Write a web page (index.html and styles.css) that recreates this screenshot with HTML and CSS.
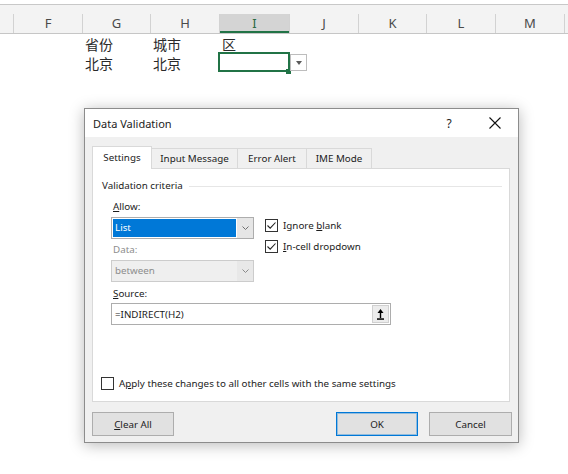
FILE: index.html
```html
<!DOCTYPE html>
<html>
<head>
<meta charset="utf-8">
<link rel="stylesheet" href="styles.css">
</head>
<body>
<div class="sheet">
  <div class="colhead">
    <div class="ch first"></div>
    <div class="ch">F</div>
    <div class="ch">G</div>
    <div class="ch">H</div>
    <div class="ch sel">I</div>
    <div class="ch">J</div>
    <div class="ch">K</div>
    <div class="ch">L</div>
    <div class="ch">M</div>
    <div class="ch"></div>
  </div>
  <div class="row r1">
    <div class="c"></div>
    <div class="c"></div>
    <div class="c">省份</div>
    <div class="c">城市</div>
    <div class="c">区</div>
  </div>
  <div class="row r2">
    <div class="c"></div>
    <div class="c"></div>
    <div class="c">北京</div>
    <div class="c">北京</div>
    <div class="c active"><span class="handle"></span><span class="dd"><span class="tri"></span></span></div>
  </div>
</div>

<div class="dialog">
  <div class="titlebar">
    <span class="title">Data Validation</span>
    <span class="tbtn help">?</span>
    <span class="tbtn close">
      <svg width="12" height="12" viewBox="0 0 12 12"><path d="M0.5 0.5 L11.5 11.5 M11.5 0.5 L0.5 11.5" stroke="#111" stroke-width="1.1" fill="none"/></svg>
    </span>
  </div>
  <div class="content">
    <div class="tabs">
      <div class="tab active w1">Settings</div>
      <div class="tab w2">Input Message</div>
      <div class="tab w3">Error Alert</div>
      <div class="tab w4">IME Mode</div>
    </div>
    <div class="panel">
      <div class="crit"><span>Validation criteria</span><span class="line"></span></div>
      <div class="fields">
        <div class="upper">
          <div class="left">
            <div class="lbl allow"><u>A</u>llow:</div>
            <div class="combo">
              <div class="val hl">List</div>
              <div class="cbtn"><svg width="7" height="4" viewBox="0 0 7 4"><path d="M0.5 0.5 L3.5 3.5 L6.5 0.5" stroke="#707070" fill="none"/></svg></div>
            </div>
            <div class="lbl data">Data:</div>
            <div class="combo dis">
              <div class="val">between</div>
              <div class="cbtn"><svg width="7" height="4" viewBox="0 0 7 4"><path d="M0.5 0.5 L3.5 3.5 L6.5 0.5" stroke="#8a8a8a" fill="none"/></svg></div>
            </div>
          </div>
          <div class="right">
            <div class="chk"><span class="box"><svg width="11" height="11" viewBox="0 0 11 11"><path d="M1.5 5.5 L4.2 8.2 L9.5 2.5" stroke="#222" stroke-width="1.1" fill="none"/></svg></span><span class="ct">Ignore <u>b</u>lank</span></div>
            <div class="chk"><span class="box"><svg width="11" height="11" viewBox="0 0 11 11"><path d="M1.5 5.5 L4.2 8.2 L9.5 2.5" stroke="#222" stroke-width="1.1" fill="none"/></svg></span><span class="ct"><u>I</u>n-cell dropdown</span></div>
          </div>
        </div>
        <div class="lbl src"><u>S</u>ource:</div>
        <div class="input">
          <span class="itext">=INDIRECT(H2)</span>
          <span class="pick"><svg width="9" height="13" viewBox="0 0 9 13"><path d="M4.5 1 L7.5 5 L1.5 5 Z" fill="#000"/><rect x="3.8" y="4.5" width="1.4" height="5.5" fill="#000"/><rect x="1" y="10.3" width="7" height="1.5" fill="#000"/></svg></span>
        </div>
      </div>
      <div class="apply"><span class="box"></span><span class="ct">A<u>p</u>ply these changes to all other cells with the same settings</span></div>
    </div>
    <div class="buttons">
      <div class="b clear"><u>C</u>lear All</div>
      <div class="b ok">OK</div>
      <div class="b cancel">Cancel</div>
    </div>
  </div>
</div>
</body>
</html>
```

FILE: styles.css
```css
html, body {
  margin: 0;
  padding: 0;
}
body {
  width: 568px;
  height: 474px;
  overflow: hidden;
  background: #fff;
  position: relative;
  font-family: "Noto Sans", "Liberation Sans", sans-serif;
}

/* spreadsheet */
.sheet {
  padding-top: 4px;
}
.colhead {
  display: grid;
  grid-template-columns: 13px 69px 68px 69px 70px 69px 68px 69px 69px 1fr;
  height: 30px;
  box-sizing: border-box;
  border-top: 1px solid #c8c8c8;
  border-bottom: 1px solid #c6c6c6;
  background: #f3f3f3;
  align-items: end;
}
.ch {
  height: 19px;
  line-height: 19px;
  text-align: center;
  font-size: 13px;
  color: #4a4a4a;
  border-left: 1px solid #d2d2d2;
}
.ch.first {
  border-left: 0;
}
.ch.sel {
  background: #d4d4d4;
  color: #2b6a45;
  box-shadow: inset 0 -2px #217346;
}
.row {
  display: grid;
  grid-template-columns: 13px 69px 68px 69px 70px 69px 68px 69px 69px 1fr;
}
.r1 {
  height: 18px;
}
.r2 {
  height: 20px;
}
.c {
  font-family: "Noto Sans CJK SC", "Noto Sans", sans-serif;
  font-size: 14px;
  line-height: 16px;
  padding-left: 3px;
  color: #2a2a2a;
}
.r1 .c {
  padding-top: 2px;
}
.r2 .c {
  padding-top: 3px;
}
.c.active {
  position: relative;
}
.c.active::before {
  content: "";
  position: absolute;
  left: -1px;
  top: 0;
  width: 72px;
  height: 20px;
  box-sizing: border-box;
  border: 2px solid #217346;
}
.handle {
  position: absolute;
  left: 67px;
  top: 17px;
  width: 5px;
  height: 5px;
  background: #217346;
}
.dd {
  position: absolute;
  left: 71px;
  top: 2px;
  width: 17px;
  height: 17px;
  box-sizing: border-box;
  border: 1px solid #bdbdbd;
  background: #fff;
  display: flex;
  align-items: center;
  justify-content: center;
}
.tri {
  width: 0;
  height: 0;
  border-left: 3.5px solid transparent;
  border-right: 3.5px solid transparent;
  border-top: 4px solid #5a5a5a;
}

/* dialog */
.dialog {
  position: absolute;
  left: 84px;
  top: 108px;
  width: 435px;
  height: 335px;
  box-sizing: border-box;
  border: 1px solid #8c8c8c;
  background: #f0f0f0;
  box-shadow: 0 2px 14px rgba(0, 0, 0, 0.28);
  font-size: 9.8px;
  color: #1c1c1c;
  display: flex;
  flex-direction: column;
}
.titlebar {
  height: 28px;
  background: #fff;
  display: flex;
  align-items: center;
  padding-left: 8px;
}
.title {
  font-size: 11px;
}
.tbtn {
  width: 46px;
  height: 28px;
  display: flex;
  align-items: center;
  justify-content: center;
}
.help {
  margin-left: auto;
  font-size: 12px;
}
.content {
  flex: 1;
  padding: 9px 8px 0 7px;
  display: flex;
  flex-direction: column;
}
.tabs {
  display: flex;
  align-items: flex-end;
  height: 22px;
}
.tab {
  height: 20px;
  box-sizing: border-box;
  border: 1px solid #d9d9d9;
  border-bottom: 0;
  background: #f0f0f0;
  text-align: center;
  line-height: 19px;
  margin-left: -1px;
}
.tab.active {
  height: 23px;
  margin-left: 0;
  margin-bottom: -1px;
  background: #fff;
  position: relative;
  z-index: 1;
  line-height: 21px;
}
.w1 { width: 60px; }
.w2 { width: 87px; }
.w3 { width: 70px; }
.w4 { width: 66px; }

.panel {
  width: 418px;
  height: 234px;
  box-sizing: border-box;
  background: #fff;
  border: 1px solid #d9d9d9;
  display: flex;
  flex-direction: column;
  padding: 10px 7px 11px 9px;
}
.crit {
  display: flex;
  align-items: center;
  height: 14px;
  line-height: 14px;
}
.crit .line {
  flex: 1;
  height: 1px;
  background: #e6e6e6;
  margin-left: 6px;
}
.fields {
  margin-left: 9px;
}
.upper {
  display: flex;
}
.left {
  width: 143px;
}
.lbl {
  height: 14px;
  line-height: 14px;
  padding-left: 2px;
}
.lbl.allow {
  margin-top: 7px;
}
.lbl.data {
  margin-top: 4px;
  color: #8d8d8d;
}
.lbl.src {
  margin-top: 5px;
}
.combo {
  margin-top: 3px;
  height: 22px;
  box-sizing: border-box;
  border: 1px solid #adadad;
  background: #fff;
  display: flex;
}
.combo .val {
  flex: 1;
  margin: 1px;
  padding-left: 2px;
  line-height: 17px;
}
.combo .val.hl {
  background: #0078d7;
  color: #fff;
}
.cbtn {
  width: 16px;
  background: #e6e6e6;
  display: flex;
  align-items: center;
  justify-content: center;
}
.combo.dis {
  border-color: #cccccc;
  background: #efefef;
}
.combo.dis .val {
  color: #8d8d8d;
}
.combo.dis .cbtn {
  background: #e8e8e8;
}
.right {
  margin-left: 11px;
  padding-top: 26px;
}
.chk {
  display: flex;
  align-items: center;
  height: 13px;
}
.chk + .chk {
  margin-top: 8px;
}
.box {
  width: 13px;
  height: 13px;
  box-sizing: border-box;
  border: 1px solid #333;
  background: #fff;
  display: flex;
  align-items: center;
  justify-content: center;
  flex: none;
}
.ct {
  margin-left: 5px;
  line-height: 13px;
}
.input {
  margin-top: 2px;
  width: 280px;
  height: 22px;
  box-sizing: border-box;
  border: 1px solid #adadad;
  display: flex;
  align-items: center;
}
.itext {
  padding-left: 3px;
}
.pick {
  margin-left: auto;
  margin-right: 1px;
  width: 17px;
  height: 18px;
  box-sizing: border-box;
  border: 1px solid #d0d0d0;
  background: #ececec;
  display: flex;
  align-items: center;
  justify-content: center;
}
.apply {
  margin-top: auto;
  margin-left: -1px;
  display: flex;
  align-items: center;
  height: 13px;
}
.apply .ct {
  margin-left: 5px;
}
.buttons {
  display: flex;
  margin-top: 10px;
  height: 24px;
}
.b {
  height: 24px;
  box-sizing: border-box;
  border: 1px solid #adadad;
  background: #e1e1e1;
  display: flex;
  align-items: center;
  justify-content: center;
}
.clear {
  width: 82px;
}
.ok {
  width: 82px;
  margin-left: auto;
  border-color: #0078d7;
  box-shadow: inset 0 0 0 1px rgba(0, 120, 215, 0.35);
}
.cancel {
  width: 83px;
  margin-left: 11px;
  margin-right: -2px;
}
u {
  text-underline-offset: 1px;
}
```
